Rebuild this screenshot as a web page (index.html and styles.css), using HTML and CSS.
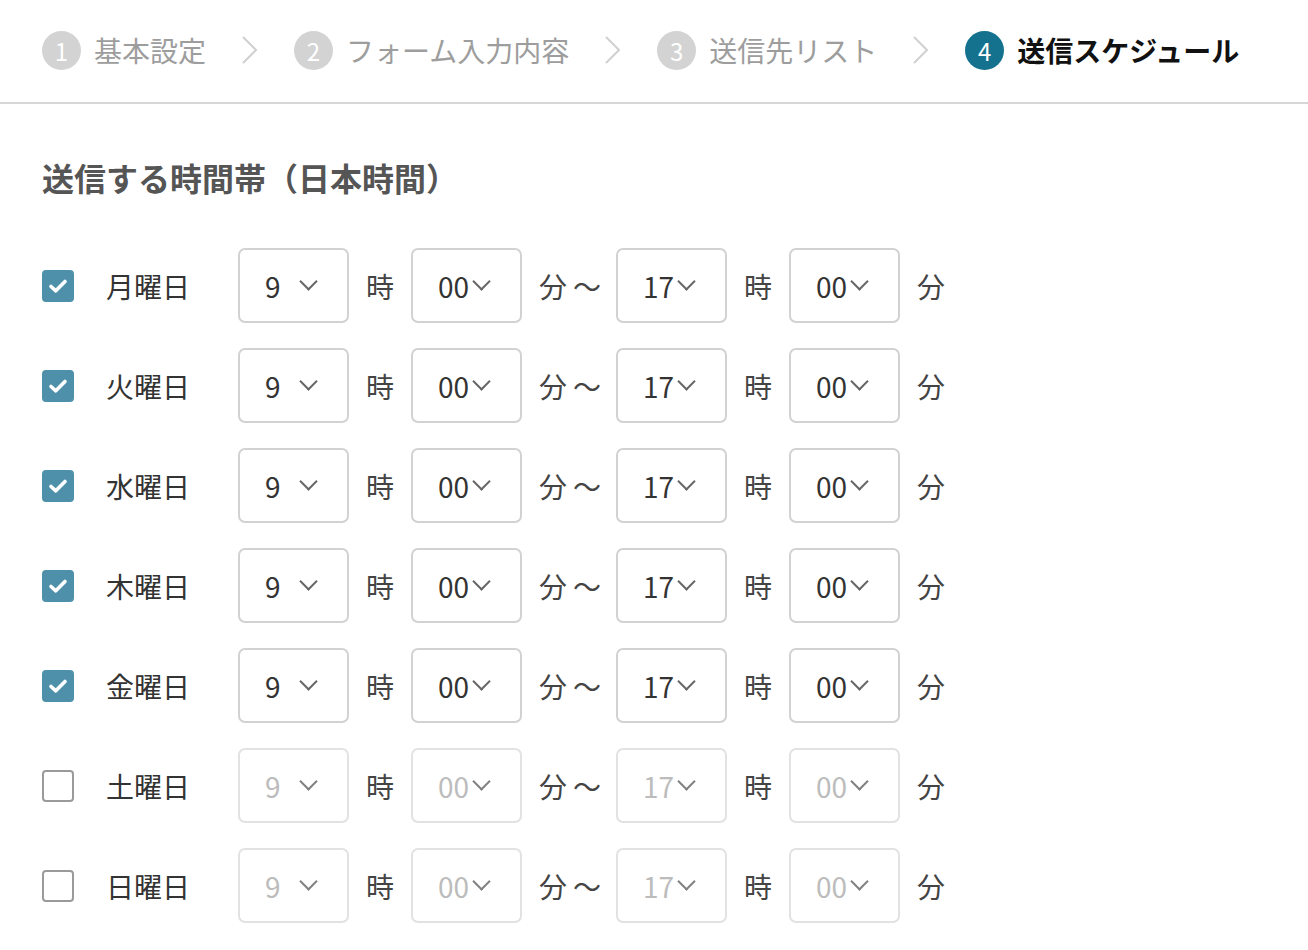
FILE: index.html
```html
<!DOCTYPE html>
<html lang="ja">
<head>
<meta charset="utf-8">
<link rel="stylesheet" href="styles.css">
</head>
<body>
<header class="steps">
  <div class="step"><span class="num">1</span><span class="step-label">基本設定</span></div>
  <svg class="sep" width="18" height="30" viewBox="0 0 18 30"><path d="M2 2 L15 15 L2 28" fill="none" stroke="#d0d0d0" stroke-width="2"/></svg>
  <div class="step"><span class="num">2</span><span class="step-label">フォーム入力内容</span></div>
  <svg class="sep" width="18" height="30" viewBox="0 0 18 30"><path d="M2 2 L15 15 L2 28" fill="none" stroke="#d0d0d0" stroke-width="2"/></svg>
  <div class="step"><span class="num">3</span><span class="step-label">送信先リスト</span></div>
  <svg class="sep" width="18" height="30" viewBox="0 0 18 30"><path d="M2 2 L15 15 L2 28" fill="none" stroke="#d0d0d0" stroke-width="2"/></svg>
  <div class="step active"><span class="num">4</span><span class="step-label">送信スケジュール</span></div>
</header>

<main class="content">
  <h2 class="title">送信する時間帯（日本時間）</h2>

  <div class="rows">
    <div class="row">
      <span class="check on"><svg width="20" height="16" viewBox="0 0 20 16"><path d="M3 8.5 L7.8 12.8 L17 3.5" fill="none" stroke="#fff" stroke-width="3.6" stroke-linecap="round" stroke-linejoin="round"/></svg></span>
      <span class="day">月曜日</span>
      <span class="sel"><span>9</span><i class="chev"></i></span><span class="unit">時</span>
      <span class="sel"><span>00</span><i class="chev"></i></span><span class="unit range">分～</span>
      <span class="sel"><span>17</span><i class="chev"></i></span><span class="unit">時</span>
      <span class="sel"><span>00</span><i class="chev"></i></span><span class="unit">分</span>
    </div>
    <div class="row">
      <span class="check on"><svg width="20" height="16" viewBox="0 0 20 16"><path d="M3 8.5 L7.8 12.8 L17 3.5" fill="none" stroke="#fff" stroke-width="3.6" stroke-linecap="round" stroke-linejoin="round"/></svg></span>
      <span class="day">火曜日</span>
      <span class="sel"><span>9</span><i class="chev"></i></span><span class="unit">時</span>
      <span class="sel"><span>00</span><i class="chev"></i></span><span class="unit range">分～</span>
      <span class="sel"><span>17</span><i class="chev"></i></span><span class="unit">時</span>
      <span class="sel"><span>00</span><i class="chev"></i></span><span class="unit">分</span>
    </div>
    <div class="row">
      <span class="check on"><svg width="20" height="16" viewBox="0 0 20 16"><path d="M3 8.5 L7.8 12.8 L17 3.5" fill="none" stroke="#fff" stroke-width="3.6" stroke-linecap="round" stroke-linejoin="round"/></svg></span>
      <span class="day">水曜日</span>
      <span class="sel"><span>9</span><i class="chev"></i></span><span class="unit">時</span>
      <span class="sel"><span>00</span><i class="chev"></i></span><span class="unit range">分～</span>
      <span class="sel"><span>17</span><i class="chev"></i></span><span class="unit">時</span>
      <span class="sel"><span>00</span><i class="chev"></i></span><span class="unit">分</span>
    </div>
    <div class="row">
      <span class="check on"><svg width="20" height="16" viewBox="0 0 20 16"><path d="M3 8.5 L7.8 12.8 L17 3.5" fill="none" stroke="#fff" stroke-width="3.6" stroke-linecap="round" stroke-linejoin="round"/></svg></span>
      <span class="day">木曜日</span>
      <span class="sel"><span>9</span><i class="chev"></i></span><span class="unit">時</span>
      <span class="sel"><span>00</span><i class="chev"></i></span><span class="unit range">分～</span>
      <span class="sel"><span>17</span><i class="chev"></i></span><span class="unit">時</span>
      <span class="sel"><span>00</span><i class="chev"></i></span><span class="unit">分</span>
    </div>
    <div class="row">
      <span class="check on"><svg width="20" height="16" viewBox="0 0 20 16"><path d="M3 8.5 L7.8 12.8 L17 3.5" fill="none" stroke="#fff" stroke-width="3.6" stroke-linecap="round" stroke-linejoin="round"/></svg></span>
      <span class="day">金曜日</span>
      <span class="sel"><span>9</span><i class="chev"></i></span><span class="unit">時</span>
      <span class="sel"><span>00</span><i class="chev"></i></span><span class="unit range">分～</span>
      <span class="sel"><span>17</span><i class="chev"></i></span><span class="unit">時</span>
      <span class="sel"><span>00</span><i class="chev"></i></span><span class="unit">分</span>
    </div>
    <div class="row">
      <span class="check"></span>
      <span class="day">土曜日</span>
      <span class="sel off"><span>9</span><i class="chev"></i></span><span class="unit">時</span>
      <span class="sel off"><span>00</span><i class="chev"></i></span><span class="unit range">分～</span>
      <span class="sel off"><span>17</span><i class="chev"></i></span><span class="unit">時</span>
      <span class="sel off"><span>00</span><i class="chev"></i></span><span class="unit">分</span>
    </div>
    <div class="row">
      <span class="check"></span>
      <span class="day">日曜日</span>
      <span class="sel off"><span>9</span><i class="chev"></i></span><span class="unit">時</span>
      <span class="sel off"><span>00</span><i class="chev"></i></span><span class="unit range">分～</span>
      <span class="sel off"><span>17</span><i class="chev"></i></span><span class="unit">時</span>
      <span class="sel off"><span>00</span><i class="chev"></i></span><span class="unit">分</span>
    </div>
  </div>
</main>
</body>
</html>
```

FILE: styles.css
```css
* { box-sizing: border-box; }

body {
  margin: 0;
  background: #fff;
  font-family: "Noto Sans CJK JP", "Noto Sans", sans-serif;
  color: #333;
}

.steps {
  height: 104px;
  display: flex;
  align-items: center;
  gap: 35px;
  padding: 0 0 2px 42px;
  border-bottom: 2px solid #d6d6d6;
}

.step {
  display: flex;
  align-items: center;
  gap: 13px;
}

.num {
  width: 39px;
  height: 39px;
  border-radius: 50%;
  background: #d3d3d3;
  color: #fff;
  font-size: 24px;
  line-height: 39px;
  text-align: center;
}

.step-label {
  font-size: 28px;
  line-height: 40px;
  color: #9d9d9d;
}

.step.active .num { background: #14728f; }
.step.active .step-label { color: #111; font-weight: 700; }

.sep { display: block; }

.content {
  padding: 0 42px;
}

.title {
  margin: 53px 0 51px;
  font-size: 32px;
  line-height: 40px;
  font-weight: 700;
  color: #555;
}

.rows {
  display: flex;
  flex-direction: column;
  gap: 25px;
}

.row {
  display: flex;
  align-items: center;
  height: 75px;
  gap: 17px;
}

.check {
  width: 32px;
  height: 32px;
  border-radius: 4px;
  border: 2px solid #9a9a9a;
  background: #fff;
  display: flex;
  align-items: center;
  justify-content: center;
  margin-right: 15px;
}

.check.on {
  background: #4e90a9;
  border-color: #4e90a9;
}

.day {
  width: 115px;
  font-size: 28px;
  color: #333;
}

.sel {
  width: 111px;
  height: 75px;
  border: 2px solid #d2d2d2;
  border-radius: 7px;
  display: flex;
  align-items: center;
  justify-content: space-between;
  padding: 0 30px 0 25px;
  font-size: 28px;
  color: #333;
}

.chev {
  width: 13px;
  height: 13px;
  border-right: 2.5px solid #666;
  border-bottom: 2.5px solid #666;
  transform: rotate(45deg);
  margin: -9px 2px 0 0;
}

.sel.off {
  border-color: #e2e2e2;
  color: #bcbcbc;
}

.sel.off .chev {
  border-color: #808080;
}

.unit {
  font-size: 28px;
  color: #444;
}

.unit.range {
  letter-spacing: 6px;
  margin-right: -8px;
}
```
